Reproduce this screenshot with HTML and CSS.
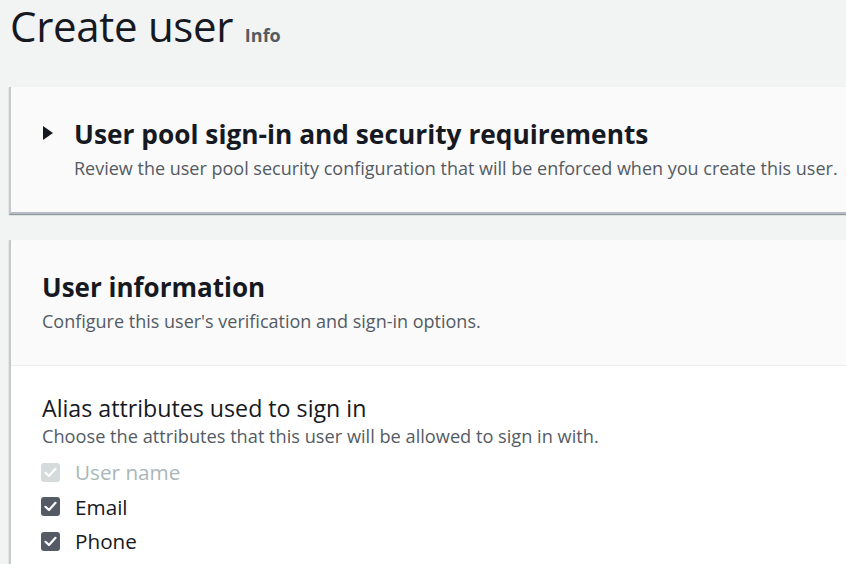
FILE: index.html
```html
<!DOCTYPE html>
<html>
<head>
<meta charset="utf-8">
<link rel="stylesheet" href="styles.css">
</head>
<body>
<div class="page">
  <h1 class="title">Create user <span class="info">Info</span></h1>
  <section class="card card-collapsed">
    <div class="exp-head">
      <svg class="caret" width="10" height="14" viewBox="0 0 10 14"><path d="M0 0 L10 7 L0 14 Z" fill="#16191f"/></svg>
      <div>
        <h2 class="h2">User pool sign-in and security requirements</h2>
        <p class="desc">Review the user pool security configuration that will be enforced when you create this user.</p>
      </div>
    </div>
  </section>
  <section class="card card-info">
    <div class="card-head">
      <h2 class="h2">User information</h2>
      <p class="desc">Configure this user's verification and sign-in options.</p>
    </div>
    <div class="card-body">
      <div class="field-label">Alias attributes used to sign in</div>
      <div class="field-desc">Choose the attributes that this user will be allowed to sign in with.</div>
      <ul class="checks">
        <li class="check disabled"><span class="box"><svg width="19" height="19" viewBox="0 0 19 19"><path d="M4.5 9.8 L8 13 L14.5 5.8" fill="none" stroke="#fff" stroke-width="2.2" stroke-linecap="round" stroke-linejoin="round"/></svg></span>User name</li>
        <li class="check"><span class="box"><svg width="19" height="19" viewBox="0 0 19 19"><path d="M4.5 9.8 L8 13 L14.5 5.8" fill="none" stroke="#fff" stroke-width="2.2" stroke-linecap="round" stroke-linejoin="round"/></svg></span>Email</li>
        <li class="check"><span class="box"><svg width="19" height="19" viewBox="0 0 19 19"><path d="M4.5 9.8 L8 13 L14.5 5.8" fill="none" stroke="#fff" stroke-width="2.2" stroke-linecap="round" stroke-linejoin="round"/></svg></span>Phone</li>
      </ul>
    </div>
  </section>
</div>
</body>
</html>
```
FILE: styles.css
```css
* { box-sizing: border-box; }
html, body { margin: 0; padding: 0; }
body {
  background: #f2f3f3;
  font-family: "Open Sans", "Noto Sans", sans-serif;
  color: #16191f;
  width: 846px;
  height: 564px;
  overflow: hidden;
}
.page {
  padding-left: 9px;
  width: 846px;
}
.title {
  margin: 0;
  padding: 0 0 0 1px;
  font-size: 42px;
  font-weight: 500;
  line-height: 52px;
  height: 87px;
  letter-spacing: -0.3px;
  white-space: nowrap;
}
.info {
  font-size: 18px;
  font-weight: 700;
  color: #545b64;
  letter-spacing: 0;
  margin-left: 1px;
}
.card {
  background: #fafafa;
  border-left: 2px solid #c6c8cc;
  box-shadow: 0 1px 1px rgba(0,28,36,0.3), 1px 1px 1px rgba(0,28,36,0.15);
  margin-right: -60px;
}
.card-collapsed {
  height: 127px;
  border-bottom: 2px solid #b8bcc2;
  margin-bottom: 26px;
}
.exp-head {
  display: flex;
  align-items: flex-start;
  padding: 31px 0 0 32px;
  gap: 21px;
}
.caret { margin-top: 8px; flex: none; }
.h2 {
  margin: 0;
  font-size: 26px;
  font-weight: 700;
  line-height: 32px;
  white-space: nowrap;
}
.exp-head .h2 { font-size: 26.3px; }
.desc {
  margin: 4px 0 0;
  font-size: 18px;
  line-height: 28px;
  color: #545b64;
  white-space: nowrap;
}
.card-head {
  height: 126px;
  padding: 31px 0 0 31px;
  border-bottom: 1px solid #eaeded;
}
.card-body {
  background: #fff;
  padding: 28px 0 20px 31px;
}
.field-label {
  font-size: 23.2px;
  line-height: 28px;
  white-space: nowrap;
}
.field-desc {
  margin-top: 1px;
  font-size: 18.2px;
  line-height: 26px;
  color: #545b64;
  white-space: nowrap;
}
.checks {
  list-style: none;
  margin: 6px 0 0;
  padding: 0;
}
.check {
  display: flex;
  align-items: center;
  gap: 15px;
  font-size: 20.7px;
  line-height: 28px;
  height: 34.5px;
}
.box {
  width: 19px;
  height: 19px;
  margin-left: -1px;
  border-radius: 3px;
  background: #545b64;
  display: flex;
  flex: none;
}
.check.disabled { color: #aab7b8; }
.check.disabled .box { background: #d5dbdb; }
```
